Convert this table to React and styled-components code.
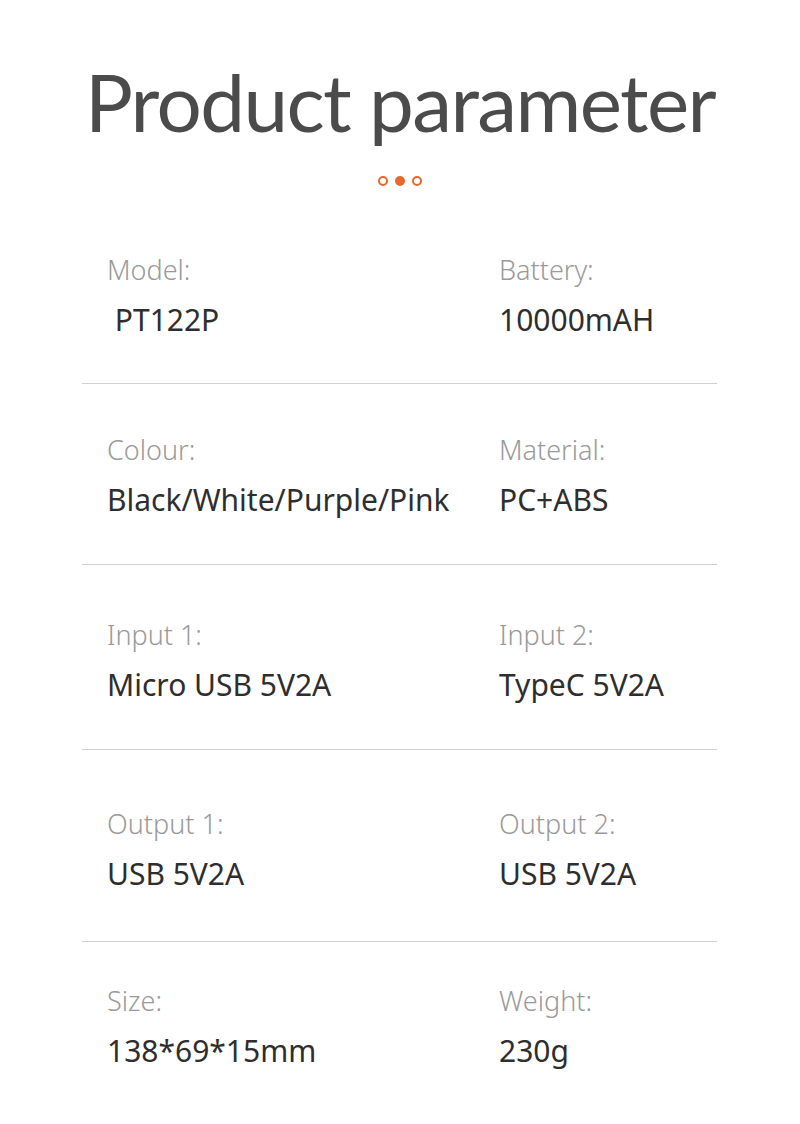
import styled, { createGlobalStyle } from 'styled-components';

const GlobalStyle = createGlobalStyle`
  body {
    margin: 0;
    background: #ffffff;
    font-family: "Noto Sans", "Open Sans", sans-serif;
  }
`;

const params = [
  { pt: 0, pb: 43, items: [['Model:', '\u00a0PT122P'], ['Battery:', '10000mAH']] },
  { pt: 48, pb: 44, items: [['Colour:', 'Black/White/Purple/Pink'], ['Material:', 'PC+ABS']] },
  { pt: 52, pb: 44, items: [['Input 1:', 'Micro USB 5V2A'], ['Input 2:', 'TypeC 5V2A']] },
  { pt: 56, pb: 47, items: [['Output 1:', 'USB 5V2A'], ['Output 2:', 'USB 5V2A']] },
  { pt: 41, pb: 0, items: [['Size:', '138*69*15mm'], ['Weight:', '230g']] },
];

function App() {
  return (
    <>
      <GlobalStyle />
      <Page>
        <Header>
          <Title>Product parameter</Title>
          <Dots>
            <Dot />
            <Dot $filled />
            <Dot />
          </Dots>
        </Header>
        <Table>
          {params.map((row, i) => (
            <Row key={i} $pt={row.pt} $pb={row.pb} $last={i === params.length - 1}>
              {row.items.map(([label, value]) => (
                <Cell key={label}>
                  <Label>{label}</Label>
                  <Value>{value}</Value>
                </Cell>
              ))}
            </Row>
          ))}
        </Table>
      </Page>
    </>
  );
}

const Page = styled.div`
  width: 800px;
  height: 1124px;
  box-sizing: border-box;
  padding-top: 56px;
  background: #fff;
`;

const Header = styled.div`
  display: flex;
  flex-direction: column;
  align-items: center;
`;

const Title = styled.h1`
  margin: 0;
  font-family: "Lato", "Open Sans", sans-serif;
  font-weight: 400;
  font-size: 80px;
  line-height: 90px;
  color: #4b4b4b;
  letter-spacing: -1.6px;
`;

const Dots = styled.div`
  display: flex;
  align-items: center;
  gap: 7px;
  margin-top: 30px;
`;

const Dot = styled.span`
  width: 10px;
  height: 10px;
  box-sizing: border-box;
  border-radius: 50%;
  border: 2px solid #e8672a;
  background: ${({ $filled }) => ($filled ? '#e8672a' : 'transparent')};
`;

const Table = styled.div`
  margin: 66px 83px 0 82px;
`;

const Row = styled.div`
  display: grid;
  grid-template-columns: 392px 1fr;
  padding: ${({ $pt }) => $pt}px 0 ${({ $pb }) => $pb}px 25px;
  border-bottom: ${({ $last }) => ($last ? 'none' : '1px solid #d0d0d0')};
`;

const Cell = styled.div`
  display: flex;
  flex-direction: column;
  gap: 12px;
`;

const Label = styled.div`
  font-size: 27px;
  line-height: 36px;
  font-weight: 300;
  color: #9a9a9a;
`;

const Value = styled.div`
  font-size: 30px;
  line-height: 40px;
  font-weight: 400;
  color: #2e2e2e;
  white-space: nowrap;
`;

export default App;
